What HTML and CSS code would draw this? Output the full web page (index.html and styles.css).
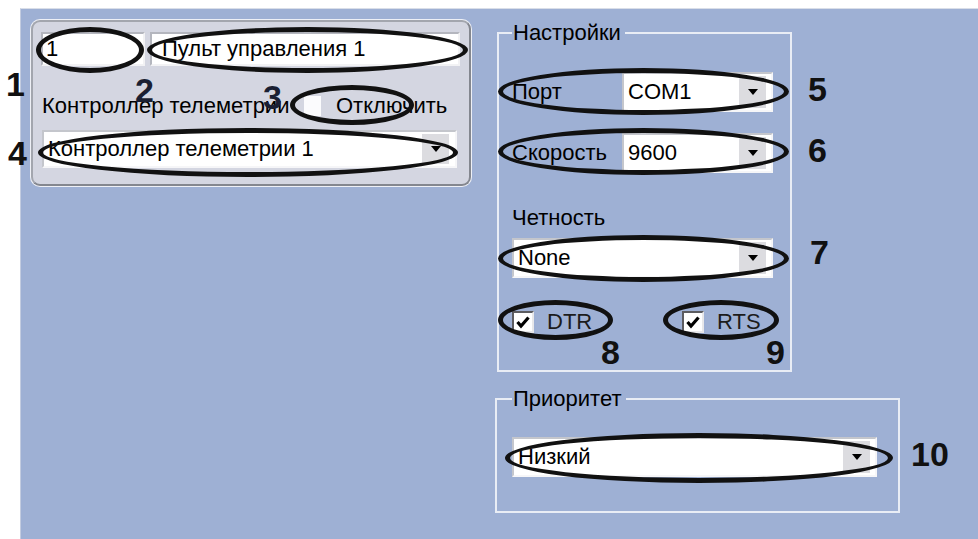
FILE: index.html
```html
<!DOCTYPE html>
<html lang="ru">
<head>
<meta charset="utf-8">
<title>Пульт управления</title>
<link rel="stylesheet" href="styles.css">
</head>
<body>
<div class="page">
  <div class="canvas">
    <div class="panel">
      <div class="name-row">
        <div class="textbox tb-id">1</div>
        <div class="textbox tb-name">Пульт управления 1</div>
      </div>
      <div class="check-row">
        <span class="cap-label">Контроллер телеметрии</span>
        <span class="flat-check"></span>
        <span class="off-label">Отключить</span>
      </div>
      <div class="combo combo-ctrl">
        <span class="value">Контроллер телеметрии 1</span>
        <span class="btn"><svg width="10" height="6" viewBox="0 0 10 6"><path d="M0 0h10L5 6z" fill="#000"/></svg></span>
      </div>
    </div>

    <div class="right">
      <fieldset class="group group-settings">
        <legend>Настройки</legend>
        <div class="field">
          <span class="flabel">Порт</span>
          <div class="combo combo-short">
            <span class="value">COM1</span>
            <span class="btn"><svg width="10" height="6" viewBox="0 0 10 6"><path d="M0 0h10L5 6z" fill="#000"/></svg></span>
          </div>
        </div>
        <div class="field field-speed">
          <span class="flabel">Скорость</span>
          <div class="combo combo-short">
            <span class="value">9600</span>
            <span class="btn"><svg width="10" height="6" viewBox="0 0 10 6"><path d="M0 0h10L5 6z" fill="#000"/></svg></span>
          </div>
        </div>
        <div class="caption">Четность</div>
        <div class="combo combo-parity">
          <span class="value">None</span>
          <span class="btn"><svg width="10" height="6" viewBox="0 0 10 6"><path d="M0 0h10L5 6z" fill="#000"/></svg></span>
        </div>
        <div class="checks">
          <span class="cb cb-dtr"><span class="box"><svg width="16" height="16" viewBox="0 0 16 16"><path d="M2.5 8l3.5 4L13.5 3.5" stroke="#000" stroke-width="3.2" fill="none"/></svg></span>DTR</span>
          <span class="cb"><span class="box"><svg width="16" height="16" viewBox="0 0 16 16"><path d="M2.5 8l3.5 4L13.5 3.5" stroke="#000" stroke-width="3.2" fill="none"/></svg></span>RTS</span>
        </div>
      </fieldset>

      <fieldset class="group group-priority">
        <legend>Приоритет</legend>
        <div class="combo combo-long">
          <span class="value">Низкий</span>
          <span class="btn"><svg width="10" height="6" viewBox="0 0 10 6"><path d="M0 0h10L5 6z" fill="#000"/></svg></span>
        </div>
      </fieldset>
    </div>
  </div>

  <div class="oval o1"></div>
  <div class="oval o2"></div>
  <div class="oval o3"></div>
  <div class="oval o4"></div>
  <div class="oval o5"></div>
  <div class="oval o6"></div>
  <div class="oval o7"></div>
  <div class="oval o8"></div>
  <div class="oval o9"></div>
  <div class="oval o10"></div>

  <span class="mark m1">1</span>
  <span class="mark m2">2</span>
  <span class="mark m3">3</span>
  <span class="mark m4">4</span>
  <span class="mark m5">5</span>
  <span class="mark m6">6</span>
  <span class="mark m7">7</span>
  <span class="mark m8">8</span>
  <span class="mark m9">9</span>
  <span class="mark m10">10</span>
</div>
</body>
</html>
```

FILE: styles.css
```css
html, body {
  margin: 0;
  padding: 0;
  background: #ffffff;
}

body {
  font-family: "Liberation Sans", Arial, sans-serif;
  font-size: 22px;
  line-height: 24px;
  color: #000;
  width: 978px;
  height: 539px;
  overflow: hidden;
}

.page {
  position: relative;
  width: 978px;
  height: 539px;
  box-sizing: border-box;
  padding: 8px 0 0 20px;
}

.canvas {
  width: 958px;
  height: 531px;
  box-sizing: border-box;
  background: #9eb0d4;
  border-top: 1px solid #d9dee8;
  border-left: 1px solid #c3cce0;
  display: flex;
  align-items: flex-start;
}

/* left panel */
.panel {
  margin: 11px 0 0 10px;
  width: 440px;
  height: 166px;
  box-sizing: border-box;
  padding: 10px 8px;
  background: #d4d6e1;
  border: 2px solid #84878f;
  border-top-color: #a3a6ae;
  border-left-color: #a3a6ae;
  border-radius: 9px;
  box-shadow: 0 0 0 1px #eef0f6;
}

.name-row {
  display: flex;
  gap: 5px;
}

.textbox {
  height: 34px;
  box-sizing: border-box;
  background: #fff;
  border: 2px solid;
  border-color: #b4b6be #f2f2f4 #f2f2f4 #b4b6be;
  padding: 3px 0 0 3px;
  white-space: nowrap;
}

.tb-id { width: 104px; }
.tb-name { width: 310px; padding-left: 10px; }

.check-row {
  display: flex;
  align-items: center;
  height: 24px;
  margin-top: 28px;
  padding-left: 1px;
  white-space: nowrap;
}

.cap-label { width: 262px; }

.flat-check {
  width: 17px;
  height: 20px;
  background: #fbfbfd;
}

.off-label { margin-left: 15px; }

/* combo boxes */
.combo {
  display: flex;
  align-items: stretch;
  height: 40px;
  box-sizing: border-box;
  background: #fff;
  border: 2px solid;
  border-color: #c4c6cc #f6f6f8 #f6f6f8 #c4c6cc;
  white-space: nowrap;
}

.combo .value {
  flex: 1;
  display: flex;
  align-items: center;
  padding-left: 4px;
}

.combo .btn {
  width: 27px;
  margin: 2px 5px 2px 0;
  background: #dcdce0;
  display: flex;
  align-items: center;
  justify-content: center;
}

.combo-ctrl {
  width: 415px;
  height: 38px;
  margin-top: 12px;
  margin-left: 1px;
}

.combo-ctrl .btn { margin-right: 6px; }

/* right column */
.right {
  display: flex;
  flex-direction: column;
  align-items: flex-start;
  margin: 12px 0 0 26px;
}

.group {
  margin: 0;
  box-sizing: border-box;
  border: 2px solid #e9edf5;
  min-width: 0;
}

.group legend {
  padding: 0 4px 0 1px;
  line-height: 24px;
  margin-left: 0;
}

.group-settings {
  width: 295px;
  height: 351px;
  padding: 27px 0 0 13px;
}

.group-priority {
  width: 405px;
  height: 126px;
  margin: 15px 0 0 -2px;
  padding: 26px 0 0 15px;
}

.field {
  display: flex;
  align-items: center;
  height: 40px;
}

.field-speed { margin-top: 21px; }

.flabel { width: 110px; }

.combo-short { width: 151px; }

.caption { margin-top: 33px; }

.combo-parity {
  width: 261px;
  margin-top: 8px;
}

.combo-long { width: 365px; }

.checks {
  display: flex;
  align-items: center;
  height: 24px;
  margin-top: 32px;
}

.cb {
  display: flex;
  align-items: center;
  gap: 13px;
  color: #1c1c1c;
}

.cb-dtr { width: 170px; }

.box {
  width: 22px;
  height: 22px;
  box-sizing: border-box;
  background: #fff;
  border: 2px solid;
  border-color: #5c5c60 #e8e8ea #e8e8ea #5c5c60;
  display: flex;
  align-items: center;
  justify-content: center;
}

/* annotation ovals */
.oval {
  position: absolute;
  box-sizing: border-box;
  border: 5px solid #111;
  border-radius: 50%;
}

.o1 { left: 36px; top: 27px; width: 108px; height: 46px; }
.o2 { left: 147px; top: 27px; width: 321px; height: 46px; }
.o3 { left: 290px; top: 85px; width: 124px; height: 40px; }
.o4 { left: 38px; top: 128px; width: 420px; height: 49px; }
.o5 { left: 498px; top: 68px; width: 291px; height: 47px; }
.o6 { left: 498px; top: 128px; width: 291px; height: 47px; }
.o7 { left: 498px; top: 235px; width: 291px; height: 47px; }
.o8 { left: 498px; top: 300px; width: 115px; height: 40px; }
.o9 { left: 663px; top: 300px; width: 116px; height: 40px; }
.o10 { left: 505px; top: 433px; width: 388px; height: 50px; }

/* annotation numbers */
.mark {
  position: absolute;
  font: bold 34px/1 "Liberation Sans", Arial, sans-serif;
  color: #111;
}

.m1 { left: 6px; top: 67px; }
.m2 { left: 135px; top: 73px; color: #1a1f33; }
.m3 { left: 263px; top: 80px; color: #1a1f33; }
.m4 { left: 8px; top: 136px; }
.m5 { left: 808px; top: 72px; }
.m6 { left: 808px; top: 133px; }
.m7 { left: 810px; top: 235px; }
.m8 { left: 601px; top: 335px; }
.m9 { left: 766px; top: 335px; }
.m10 { left: 911px; top: 437px; }
```
